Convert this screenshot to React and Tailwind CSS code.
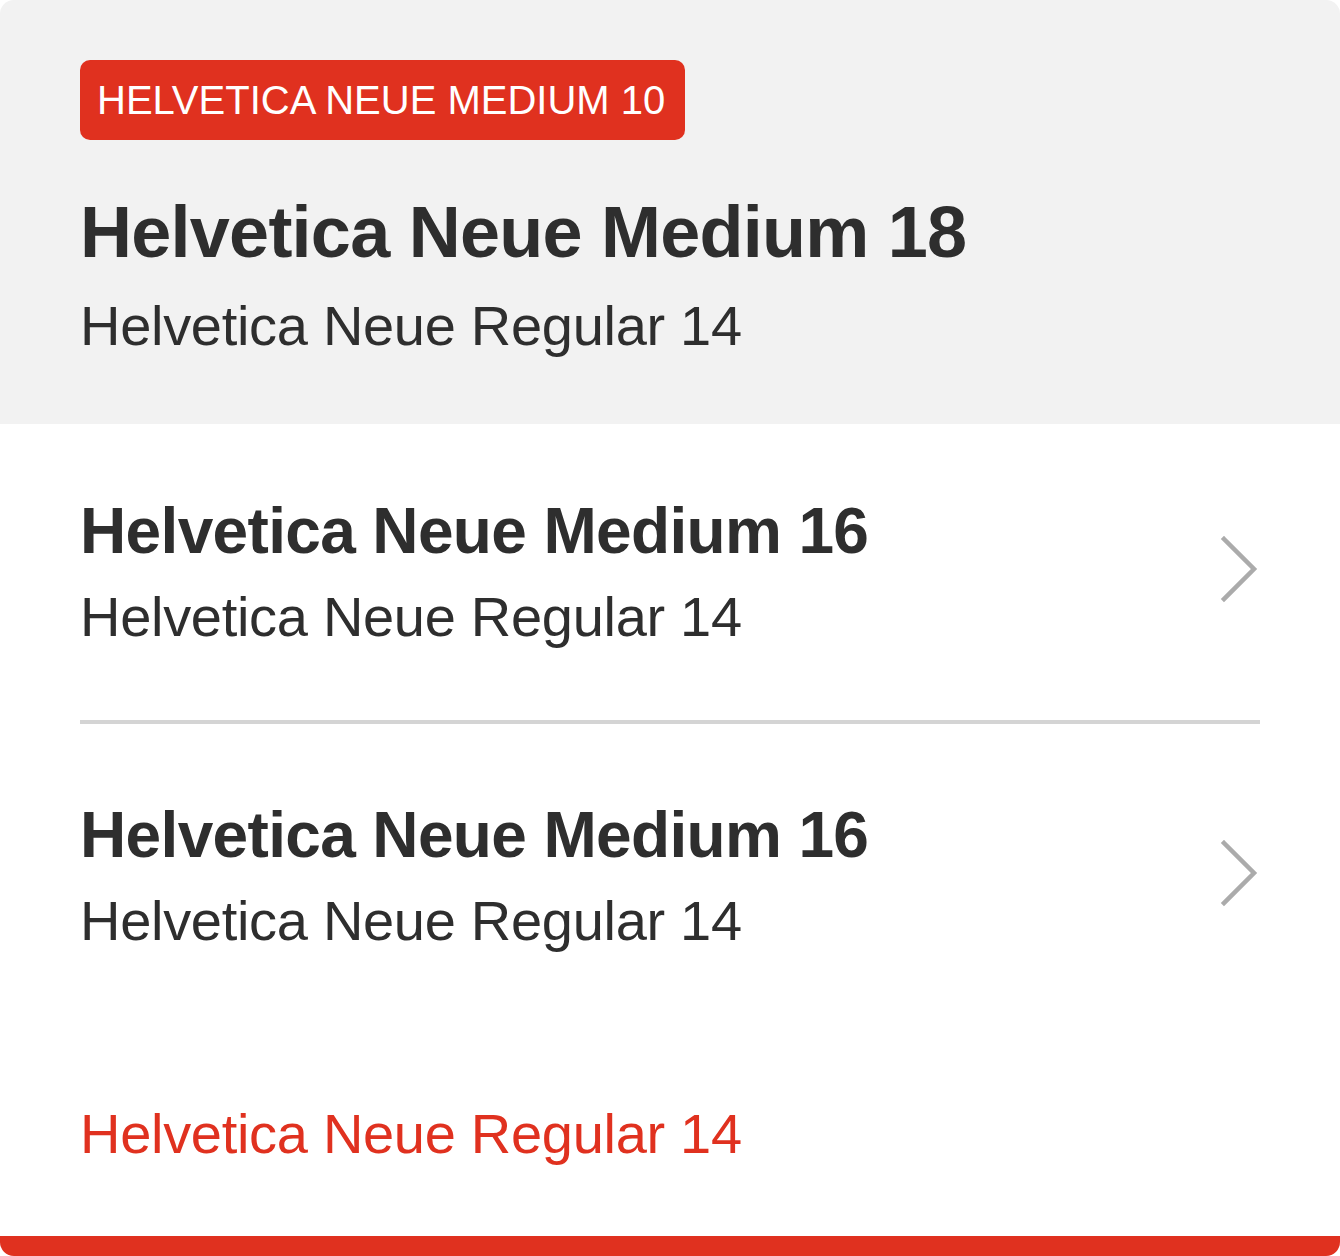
import React from 'react';

const Chevron = () => (
  <svg width="40" height="68" viewBox="0 0 40 68" fill="none" className="shrink-0 mb-[7px]">
    <polyline points="4,4 34,34 4,64" stroke="#ababab" strokeWidth="4.5" strokeLinecap="square" />
  </svg>
);

const ListRow = ({ title, subtitle }) => (
  <div className="flex items-center justify-between">
    <div className="flex flex-col">
      <h3 className="text-[64px] leading-[64px] font-bold tracking-[-0.65px] text-[#2e2e2e]">{title}</h3>
      <p className="mt-[26px] text-[56px] leading-[56px] tracking-[-0.3px] text-[#2e2e2e]">{subtitle}</p>
    </div>
    <Chevron />
  </div>
);

const App = () => {
  return (
    <div className="w-[1340px] h-[1256px] bg-white font-['Liberation_Sans',Arial,sans-serif]">
      <div className="flex flex-col h-full rounded-[14px] overflow-hidden bg-white">
        {/* Header */}
        <div className="bg-[#f2f2f2] px-[80px] pt-[60px] h-[424px]">
          <span className="inline-flex items-center h-[80px] pl-[17px] pr-[20px] rounded-[10px] bg-[#e0311f] text-white text-[40px] leading-none">
            HELVETICA NEUE MEDIUM 10
          </span>
          <h1 className="mt-[56px] text-[72px] leading-[72px] font-bold tracking-[-0.75px] text-[#2e2e2e]">
            Helvetica Neue Medium 18
          </h1>
          <p className="mt-[30px] text-[56px] leading-[56px] tracking-[-0.3px] text-[#2e2e2e]">
            Helvetica Neue Regular 14
          </p>
        </div>

        {/* List */}
        <div className="flex-1 flex flex-col px-[80px]">
          <div className="pt-[75px] pb-[75px] border-b-4 border-[#d4d4d4]">
            <ListRow title="Helvetica Neue Medium 16" subtitle="Helvetica Neue Regular 14" />
          </div>
          <div className="pt-[79px]">
            <ListRow title="Helvetica Neue Medium 16" subtitle="Helvetica Neue Regular 14" />
          </div>
          <p className="mt-[157px] text-[56px] leading-[56px] tracking-[-0.3px] text-[#e0311f]">
            Helvetica Neue Regular 14
          </p>
        </div>

        <div className="h-[20px] bg-[#e0311f] rounded-b-[10px]" />
      </div>
    </div>
  );
};

export default App;
